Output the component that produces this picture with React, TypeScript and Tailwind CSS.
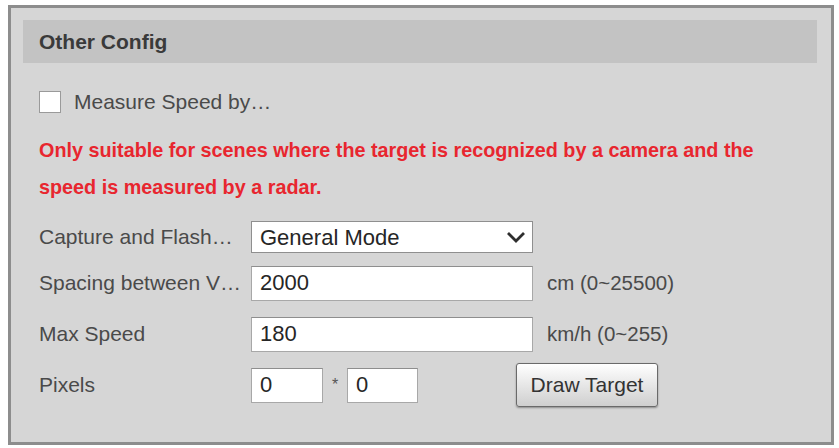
import type { FC, ReactNode } from 'react';

const font = "font-['Liberation_Sans',Arial,sans-serif]";

interface RowProps {
  label: string;
  className?: string;
  children: ReactNode;
}

// one label + control line of the form
const Row: FC<RowProps> = ({ label, className = '', children }) => (
  <div className={`flex h-[36px] items-center ${className}`}>
    <div className="w-[212px] shrink-0 truncate text-[21px] text-[#4a4a4a]">
      {label}
    </div>
    {children}
  </div>
);

const TextBox: FC<{ value: string; width: string }> = ({ value, width }) => (
  <input
    type="text"
    defaultValue={value}
    className={`${width} h-[35px] border border-[#a8a8a8] border-t-[#8e8e8e] bg-white pl-[8px] text-[22px] text-[#262626] outline-none ${font}`}
  />
);

const Unit: FC<{ children: ReactNode }> = ({ children }) => (
  <span className="ml-[14px] text-[20.5px] text-[#4a4a4a]">{children}</span>
);

export default function App() {
  return (
    <div className={`h-[448px] w-[839px] bg-white pl-[8px] pt-[5px] ${font}`}>
      <div className="h-[440px] w-[826px] border-[3px] border-[#8d8d8d] bg-[#d6d6d6]">
        <div className="ml-[12px] mt-[12px] flex h-[43px] w-[794px] items-center bg-[#c3c3c3] pl-[16px] text-[21px] font-bold text-[#3a3a3a]">
          Other Config
        </div>

        <div className="pl-[28px]">
          <label className="mt-[28px] flex h-[22px] items-center">
            <span className="h-[22px] w-[22px] border border-[#9a9a9a] bg-white" />
            <span className="ml-[13px] text-[21px] text-[#4a4a4a]">
              Measure Speed by…
            </span>
          </label>

          <p className="mt-[19px] w-[760px] text-[19.8px] font-bold leading-[37px] text-[#e8262f]">
            Only suitable for scenes where the target is recognized by a camera
            and the speed is measured by a radar.
          </p>

          <Row label="Capture and Flash…" className="mt-[13px]">
            <div className="flex h-[32px] w-[282px] items-center justify-between border border-[#8f8f8f] bg-white pl-[8px] pr-[6px] text-[22px] text-[#262626]">
              <span>General Mode</span>
              <svg width="20" height="12" viewBox="0 0 20 12">
                <path
                  d="M2 2 L10 10 L18 2"
                  fill="none"
                  stroke="#2e2e2e"
                  strokeWidth="2.8"
                />
              </svg>
            </div>
          </Row>

          <Row label="Spacing between V…" className="mt-[10px]">
            <TextBox value="2000" width="w-[282px]" />
            <Unit>cm (0~25500)</Unit>
          </Row>

          <Row label="Max Speed" className="mt-[15px]">
            <TextBox value="180" width="w-[282px]" />
            <Unit>km/h (0~255)</Unit>
          </Row>

          <Row label="Pixels" className="mt-[15px]">
            <TextBox value="0" width="w-[72px]" />
            <span className="w-[24px] text-center text-[16px] text-[#555]">*</span>
            <TextBox value="0" width="w-[71px]" />
            <button
              type="button"
              className="ml-[98px] h-[44px] w-[142px] rounded-[3px] border border-[#6a6a6a] bg-gradient-to-b from-white to-[#cfcfcf] text-[21px] text-[#333] shadow-[0_1px_2px_rgba(0,0,0,0.35)]"
            >
              Draw Target
            </button>
          </Row>
        </div>
      </div>
    </div>
  );
}
